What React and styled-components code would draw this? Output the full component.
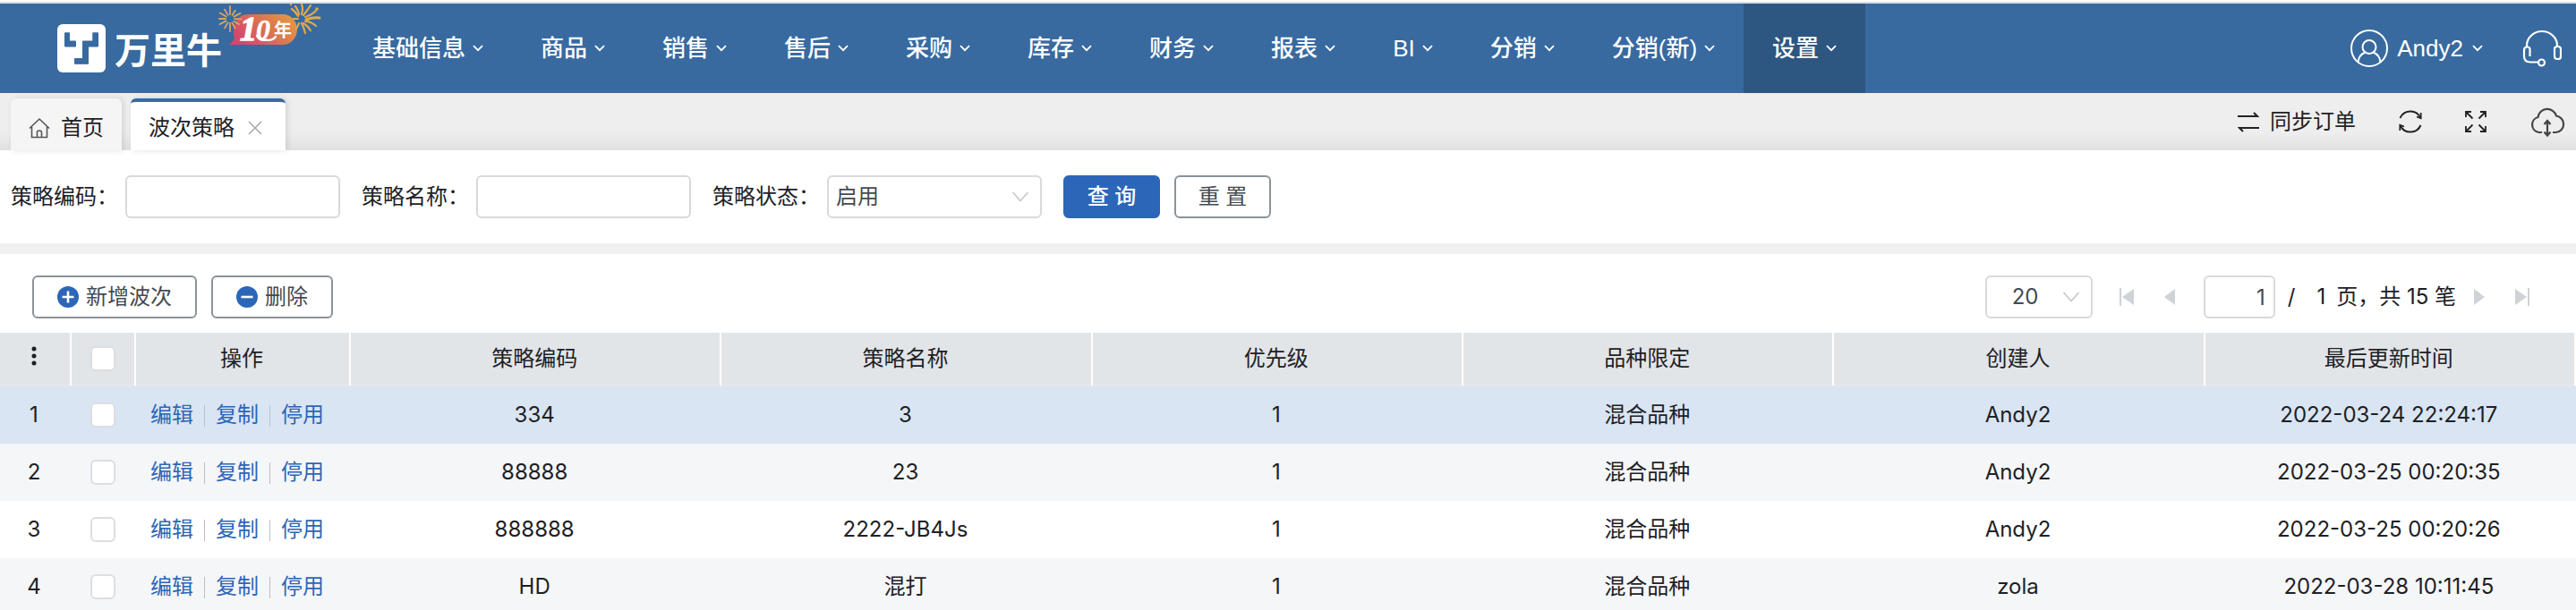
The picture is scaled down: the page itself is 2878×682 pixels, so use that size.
import React from "react";
import styled, { createGlobalStyle } from "styled-components";

const Global = createGlobalStyle`
  *, *::before, *::after { box-sizing: border-box; }
  body {
    margin: 0;
    overflow: hidden;
    background: #fff;
    color: #1d2126;
    font-family: Inter, "Noto Sans CJK SC", sans-serif;
    font-size: 24px;
    line-height: 32px;
  }
  button, input, select { font: inherit; color: inherit; margin: 0; }
`;

const Page = styled.div`
  display: flex;
  flex-direction: column;
  height: 100vh;
  overflow: hidden;
`;

const TopEdge = styled.div`
  flex: none;
  height: 4px;
  border-bottom: 2px solid #dadcdf;
`;

/* ---------- header ---------- */

const Header = styled.header`
  display: flex;
  flex: none;
  height: 100px;
  padding-right: 16px;
  background: #386aa0;
  color: #fff;
  font-family: "Liberation Sans", "Noto Sans CJK SC", sans-serif;
  font-size: 26px;
  font-weight: 500;
`;

const Brand = styled.a`
  position: relative;
  display: flex;
  flex: none;
  align-items: center;
  gap: 10px;
  width: 384px;
  padding-left: 64px;
  color: inherit;
  text-decoration: none;
`;

const Wordmark = styled.span`
  font-family: "Noto Sans CJK SC", sans-serif;
  font-size: 40px;
  font-weight: 700;
  line-height: 48px;
`;

const Anniversary = styled.svg`
  position: absolute;
  left: 240px;
  top: 0;
`;

const Nav = styled.nav`
  display: flex;
  flex: 1;
`;

const NavItem = styled.button`
  display: flex;
  align-items: center;
  gap: 8px;
  padding: 0 32px;
  border: 0;
  background: ${(p) => (p.$active ? "#2d5680" : "transparent")};
  white-space: nowrap;
`;

const HeaderActions = styled.div`
  display: flex;
  align-items: center;
  gap: 44px;
`;

const HeaderButton = styled.button`
  display: flex;
  align-items: center;
  gap: 10px;
  padding: 0;
  border: 0;
  background: transparent;
`;

/* ---------- tab bar ---------- */

const TabBar = styled.div`
  display: flex;
  flex: none;
  justify-content: space-between;
  height: 64px;
  padding: 6px 12px 0;
  background: linear-gradient(#eeeeee 0, #eeeeee 44px, #e0e0e0 64px);
`;

const Tabs = styled.div`
  display: flex;
  gap: 10px;
`;

const Tab = styled.div`
  display: flex;
  align-items: center;
  padding: ${(p) => (p.$active ? "4px 26px 0 20px" : "8px 20px 0")};
  gap: 15px;
  border-radius: 6px 6px 0 0;
  border-top: ${(p) => (p.$active ? "4px solid #386aa0" : "0")};
  background: ${(p) => (p.$active ? "#fff" : "#f5f5f5")};
  box-shadow: 2px 0 6px rgba(0, 0, 0, 0.12);
`;

const TabLink = styled.a`
  display: flex;
  align-items: center;
  gap: 12px;
  color: inherit;
  text-decoration: none;
`;

const IconButton = styled.button`
  display: flex;
  align-items: center;
  gap: 12px;
  padding: 0;
  border: 0;
  background: transparent;
  color: ${(p) => p.$color || "inherit"};
`;

const TabTools = styled.div`
  display: flex;
  align-items: center;
  gap: 48px;
  height: 52px;
  color: #222;
`;

/* ---------- filters ---------- */

const Filters = styled.form`
  display: flex;
  flex: none;
  align-items: center;
  gap: 24px;
  height: 104px;
  padding: 0 12px;
`;

const Field = styled.div`
  display: flex;
  align-items: center;
  gap: 8px;
`;

const FieldLabel = styled.label`
  white-space: nowrap;
`;

const TextInput = styled.input`
  width: ${(p) => p.$width || "240px"};
  height: 48px;
  padding: 0 9px;
  border: 2px solid #d9d9d9;
  border-radius: 6px;
  background: #fff;
  color: #444a50;
  text-align: ${(p) => p.$align || "left"};
`;

const SelectBox = styled.div`
  position: relative;
  width: ${(p) => p.$width};

  svg {
    position: absolute;
    right: 14px;
    top: 18px;
    pointer-events: none;
  }
`;

const Select = styled.select`
  width: 100%;
  height: 48px;
  padding: 0 40px 0 ${(p) => p.$pad};
  appearance: none;
  border: 2px solid #d9d9d9;
  border-radius: 6px;
  background: #fff;
  color: #444a50;
`;

const ButtonRow = styled.div`
  display: flex;
  gap: 16px;
`;

const Button = styled.button`
  display: flex;
  align-items: center;
  justify-content: center;
  gap: 8px;
  height: 48px;
  padding: 0 26px;
  border: 2px solid ${(p) => (p.$primary ? "#2c66b8" : "#8b9299")};
  border-radius: 6px;
  background: ${(p) => (p.$primary ? "#2c66b8" : "#fff")};
  color: ${(p) => (p.$primary ? "#fff" : "#444a50")};
  font-weight: ${(p) => (p.$primary ? 500 : 400)};
  white-space: nowrap;
`;

const FormButton = styled(Button)`
  width: 108px;
  padding: 0;
`;

const Band = styled.div`
  flex: none;
  height: 12px;
  background: #f0f0f0;
`;

/* ---------- list toolbar ---------- */

const ListBar = styled.div`
  display: flex;
  flex: none;
  align-items: flex-start;
  justify-content: space-between;
  height: 88px;
  padding: 24px 52px 0 36px;
`;

const Pager = styled.div`
  display: flex;
  align-items: center;
  height: 48px;
`;

const PagerButtons = styled.div`
  display: flex;
  align-items: center;
  gap: 34px;
  color: #cfd3d7;
  padding: ${(p) => p.$pad};
`;

const PagerText = styled.span`
  padding-left: ${(p) => p.$pad};
  white-space: pre;
`;

/* ---------- table ---------- */

const Table = styled.table`
  flex: none;
  width: 100%;
  table-layout: fixed;
  border-collapse: separate;
  border-spacing: 0;
  text-align: center;
`;

const HeadCell = styled.th`
  width: ${(p) => p.$width || "auto"};
  height: 60px;
  padding: 0 ${(p) => (p.$tick ? 0 : 2)}px 0 0;
  border-right: 2px solid #fff;
  border-bottom: 2px solid #e7e8ea;
  background: #e2e5e8;
  font-weight: 400;
`;

const Row = styled.tr`
  background: ${(p) => (p.$selected ? "#d9e5f3" : "#fff")};
  &:nth-child(even) { background: #f5f6f8; }
`;

const Cell = styled.td`
  height: 64px;
  padding: 0 ${(p) => (p.$tick ? 2 : 4)}px 0 0;
`;

const Checkbox = styled.input`
  display: block;
  width: 28px;
  height: 28px;
  margin: 0 auto;
  appearance: none;
  border: 2px solid #dcdee1;
  border-radius: 6px;
  background: #fff;
`;

const RowActions = styled.div`
  display: flex;
  align-items: center;
  padding-left: 16px;
`;

const RowLink = styled.a`
  color: #2c66b8;
  text-decoration: none;

  & + & {
    margin-left: 12px;
  }
  & + &::before {
    content: "";
    display: inline-block;
    width: 1px;
    height: 24px;
    margin-right: 12px;
    background: #b9bfc6;
    vertical-align: middle;
  }
`;

/* ---------- drawings ---------- */

const Line = ({ w, h, stroke = 2, children }) => (
  <svg width={w} height={h} viewBox={`0 0 ${w} ${h}`} fill="none" stroke="currentColor" strokeWidth={stroke} aria-hidden="true">
    {children}
  </svg>
);

const NavChevron = () => (
  <Line w={12} h={8} stroke={1.8}><path d="M1 1.2 6 6.2 11 1.2" /></Line>
);

const SelectChevron = () => (
  <svg width="20" height="12" viewBox="0 0 20 12" fill="none" stroke="#c4c7ca" strokeWidth="1.6" aria-hidden="true">
    <path d="M1.5 1 10 10.5 18.5 1" />
  </svg>
);

const LogoMark = () => (
  <svg width="54" height="54" viewBox="0 0 54 54" aria-hidden="true">
    <rect width="54" height="54" rx="6" fill="#fff" />
    <g fill="#386aa0" stroke="#386aa0" strokeLinejoin="round">
      <path d="M8.5 9.8H13.5V19H20.5V25H8.5Z" />
      <path d="M28.5 19H39.8V9.8H45.5V25H34.5V44.3H19.5V38.5H28.5Z" />
    </g>
  </svg>
);

const sparks = [
  [0, 5, 14], [32, 5, 11], [62, 5, 13], [92, 5, 13], [122, 5, 12], [152, 5, 12],
  [180, 5, 14], [210, 5, 12], [242, 5, 13], [270, 5, 12], [300, 5, 13], [330, 5, 12],
];

const AnniversaryBadge = () => (
  <Anniversary width="120" height="56" viewBox="0 0 120 56" aria-label="10年">
    <defs>
      <linearGradient id="pill" x1="0" x2="1" y1="0.4" y2="0">
        <stop offset="0" stopColor="#d4486c" />
        <stop offset="0.5" stopColor="#dc7650" />
        <stop offset="1" stopColor="#e5a03c" />
      </linearGradient>
    </defs>
    <path d="M38 12H76A16 17 0 0 1 76 46H16Q21 42 22 38Q20 34 21 29Q23 12 38 12Z" fill="url(#pill)" />
    <g stroke="#d9a75f" strokeWidth="1.8" strokeLinecap="round">
      {sparks.map(([deg, from, to]) => (
        <line key={deg} x1="17" y1={17 - from} x2="17" y2={17 - to} transform={`rotate(${deg} 17 17)`} />
      ))}
    </g>
    <g fill="none" stroke="#e0a94e" strokeWidth="2.2" strokeLinecap="round">
      <path d="M97 12Q99 5 97 1" />
      <path d="M99 13Q103 8 107 2" />
      <path d="M101 15Q108 13 113 8" />
      <path d="M102 18Q110 15 117 16" strokeWidth="3" />
      <path d="M101 20Q108 20 113 25" />
      <path d="M99 22Q104 25 107 30" />
      <path d="M97 22Q100 28 101 33" />
      <path d="M94 22Q93 25 91 28" />
      <path d="M93 14Q90 9 86 6" />
      <path d="M93 17H88" />
      <path d="M94 12Q93 7 90 3" />
    </g>
    <circle cx="114" cy="6" r="1.8" fill="#e0a94e" />
    <circle cx="85" cy="1" r="1.2" fill="#e0a94e" />
    <g fill="#fff" stroke="#fff" fontWeight="700">
      <text x="28" y="41" fontSize="38" strokeWidth="1.4" fontStyle="italic" fontFamily="Liberation Serif, serif">1</text>
      <text x="46" y="40" fontSize="32" strokeWidth="0.4" fontStyle="italic" fontFamily="Liberation Serif, serif">0</text>
      <text x="66" y="37" fontSize="20" strokeWidth="0" fontFamily="Noto Sans CJK SC, sans-serif">年</text>
    </g>
    <path d="M47 36Q50 42 57 40.500Q64 42 68 37" fill="none" stroke="#fff" strokeWidth="2.400" strokeLinecap="round" />
  </Anniversary>
);

const UserIcon = () => (
  <Line w={42} h={42}>
    <circle cx="21" cy="21" r="20" />
    <circle cx="21" cy="19.500" r="7.500" />
    <path d="M8.500 36.500C9 30 13 27 16.500 25.500M33.500 36.500C33 30 29 27 25.500 25.500" />
  </Line>
);

const HeadsetIcon = () => (
  <Line w={44} h={42} stroke={2.2}>
    <path d="M5 20V18A17 16 0 0 1 39 18V20" />
    <rect x="36" y="19" width="7" height="14" rx="3" />
    <path d="M8.500 30V22Q8.500 19.500 5.500 19.500Q2 19.500 2 23V30Q2 36.500 9 36.500H17.500" />
    <circle cx="21.500" cy="37" r="3.500" />
  </Line>
);

const HomeIcon = () => (
  <svg width="24" height="24" viewBox="0 0 24 24" fill="none" stroke="#555" strokeWidth="1.600" aria-hidden="true">
    <path d="M1 12.500 12 2 23 12.500M3.500 11V22.500H20.500V11M9.500 22.500V17Q9.500 15 12 15T14.500 17V22.500" />
  </svg>
);

const CloseIcon = () => (
  <Line w={16} h={16} stroke={1.6}><path d="M1 1 15 15M15 1 1 15" /></Line>
);

const SwapIcon = () => (
  <Line w={24} h={24}><path d="M0 6H22L18 2M24 19H2L6 23" /></Line>
);

const RefreshIcon = () => (
  <Line w={26} h={28}>
    <path d="M1.500 10A12.500 12.500 0 0 1 24 9M24.500 18A12.500 12.500 0 0 1 2 19" />
    <path d="M24.700 4V10.300L20 8.500M1.300 24V17.700L6 19.500" strokeWidth="1.700" />
  </Line>
);

const ExpandIcon = () => (
  <Line w={24} h={24} stroke={1.8}>
    <path d="M1 7V1H7M1 1 8.500 8.500M17 1H23V7M23 1 15.500 8.500M1 17V23H7M1 23 8.500 15.500M23 17V23H17M23 23 15.500 15.500" />
  </Line>
);

const CloudIcon = () => (
  <svg width="40" height="36" viewBox="0 0 40 36" fill="none" stroke="#444" strokeWidth="2.200" aria-hidden="true">
    <path d="M14 30H10.500A8.700 8.700 0 0 1 9.500 13A10.500 10.500 0 0 1 30 11.500A9.300 9.300 0 0 1 29.500 30H26" />
    <path d="M20 17.500V32.500M16.500 21 20 17 23.500 21M16.500 29.500 20 33.500 23.500 29.500" />
  </svg>
);

const BadgeIcon = ({ plus }) => (
  <svg width="24" height="24" viewBox="0 0 24 24" aria-hidden="true">
    <circle cx="12" cy="12" r="12" fill="#2c66b8" />
    <path d={plus ? "M5.500 12H18.500M12 5.500V18.500" : "M5.500 12H18.500"} stroke="#fff" strokeWidth="2.600" />
  </svg>
);

const PageArrow = ({ back, edge }) => (
  <svg width={edge ? 16 : 12} height="20" viewBox={edge ? "0 0 16 20" : "0 0 12 20"} fill="currentColor" aria-hidden="true">
    {edge && back && <path d="M0 0H2V20H0ZM16 1V19L3 10Z" />}
    {edge && !back && <path d="M14 0H16V20H14ZM0 1V19L13 10Z" />}
    {!edge && back && <path d="M12 1V19L0 10Z" />}
    {!edge && !back && <path d="M0 1V19L12 10Z" />}
  </svg>
);

const DotsIcon = () => (
  <svg width="6" height="22" viewBox="0 0 6 22" fill="#1d2126" aria-hidden="true">
    <circle cx="3" cy="3" r="2.500" /><circle cx="3" cy="11" r="2.500" /><circle cx="3" cy="19" r="2.500" />
  </svg>
);

/* ---------- data ---------- */

const menu = ["基础信息", "商品", "销售", "售后", "采购", "库存", "财务", "报表", "BI", "分销", "分销(新)", "设置"];
const columns = ["策略编码", "策略名称", "优先级", "品种限定", "创建人", "最后更新时间"];
const rows = [
  ["334", "3", "1", "混合品种", "Andy2", "2022-03-24 22:24:17"],
  ["88888", "23", "1", "混合品种", "Andy2", "2022-03-25 00:20:35"],
  ["888888", "2222-JB4Js", "1", "混合品种", "Andy2", "2022-03-25 00:20:26"],
  ["HD", "混打", "1", "混合品种", "zola", "2022-03-28 10:11:45"],
];

export default function App() {
  return (
    <Page>
      <Global />
      <TopEdge />
      <Header>
        <Brand href="#home">
          <LogoMark />
          <Wordmark>万里牛</Wordmark>
          <AnniversaryBadge />
        </Brand>
        <Nav>
          {menu.map((name) => (
            <NavItem key={name} type="button" $active={name === "设置"}>
              {name}
              <NavChevron />
            </NavItem>
          ))}
        </Nav>
        <HeaderActions>
          <HeaderButton type="button">
            <UserIcon />
            Andy2
            <NavChevron />
          </HeaderButton>
          <HeaderButton type="button" aria-label="客服"><HeadsetIcon /></HeaderButton>
        </HeaderActions>
      </Header>

      <TabBar>
        <Tabs>
          <Tab>
            <TabLink href="#home"><HomeIcon />首页</TabLink>
          </Tab>
          <Tab $active>
            <TabLink href="#wave">波次策略</TabLink>
            <IconButton type="button" $color="#aaa" aria-label="关闭"><CloseIcon /></IconButton>
          </Tab>
        </Tabs>
        <TabTools>
          <IconButton type="button"><SwapIcon />同步订单</IconButton>
          <IconButton type="button" aria-label="刷新"><RefreshIcon /></IconButton>
          <IconButton type="button" aria-label="全屏"><ExpandIcon /></IconButton>
          <IconButton type="button" aria-label="上传下载"><CloudIcon /></IconButton>
        </TabTools>
      </TabBar>

      <Filters onSubmit={(e) => e.preventDefault()}>
        <Field>
          <FieldLabel htmlFor="code">策略编码：</FieldLabel>
          <TextInput id="code" type="text" />
        </Field>
        <Field>
          <FieldLabel htmlFor="name">策略名称：</FieldLabel>
          <TextInput id="name" type="text" />
        </Field>
        <Field>
          <FieldLabel htmlFor="state">策略状态：</FieldLabel>
          <SelectBox $width="240px">
            <Select id="state" $pad="8px" defaultValue="启用">
              <option>启用</option>
              <option>停用</option>
            </Select>
            <SelectChevron />
          </SelectBox>
        </Field>
        <ButtonRow>
          <FormButton type="submit" $primary>查 询</FormButton>
          <FormButton type="reset">重 置</FormButton>
        </ButtonRow>
      </Filters>

      <Band />

      <ListBar>
        <ButtonRow>
          <Button type="button"><BadgeIcon plus />新增波次</Button>
          <Button type="button"><BadgeIcon />删除</Button>
        </ButtonRow>
        <Pager>
          <SelectBox $width="120px">
            <Select $pad="28px" aria-label="每页条数" defaultValue="20">
              <option>20</option>
              <option>50</option>
            </Select>
            <SelectChevron />
          </SelectBox>
          <PagerButtons $pad="0 32px 0 30px">
            <IconButton type="button" aria-label="首页"><PageArrow back edge /></IconButton>
            <IconButton type="button" aria-label="上一页"><PageArrow back /></IconButton>
          </PagerButtons>
          <TextInput type="text" aria-label="页码" defaultValue="1" $width="80px" $align="right" />
          <PagerText $pad="14px">/</PagerText>
          <PagerText $pad="24px">1</PagerText>
          <PagerText $pad="12px">页，共 15 笔</PagerText>
          <PagerButtons $pad="0 0 0 20px">
            <IconButton type="button" aria-label="下一页"><PageArrow /></IconButton>
            <IconButton type="button" aria-label="末页"><PageArrow edge /></IconButton>
          </PagerButtons>
        </Pager>
      </ListBar>

      <Table>
        <thead>
          <tr>
            <HeadCell $width="80px"><DotsIcon /></HeadCell>
            <HeadCell $width="72px" $tick><Checkbox type="checkbox" aria-label="全选" /></HeadCell>
            <HeadCell $width="240px">操作</HeadCell>
            {columns.map((c) => <HeadCell key={c}>{c}</HeadCell>)}
          </tr>
        </thead>
        <tbody>
          {rows.map((r, i) => (
            <Row key={r[0]} $selected={i === 0}>
              <Cell>{i + 1}</Cell>
              <Cell $tick><Checkbox type="checkbox" aria-label={`选择 ${r[0]}`} /></Cell>
              <Cell>
                <RowActions>
                  <RowLink href="#edit">编辑</RowLink>
                  <RowLink href="#copy">复制</RowLink>
                  <RowLink href="#stop">停用</RowLink>
                </RowActions>
              </Cell>
              {r.map((v, k) => <Cell key={k}>{v}</Cell>)}
            </Row>
          ))}
        </tbody>
      </Table>
    </Page>
  );
}
